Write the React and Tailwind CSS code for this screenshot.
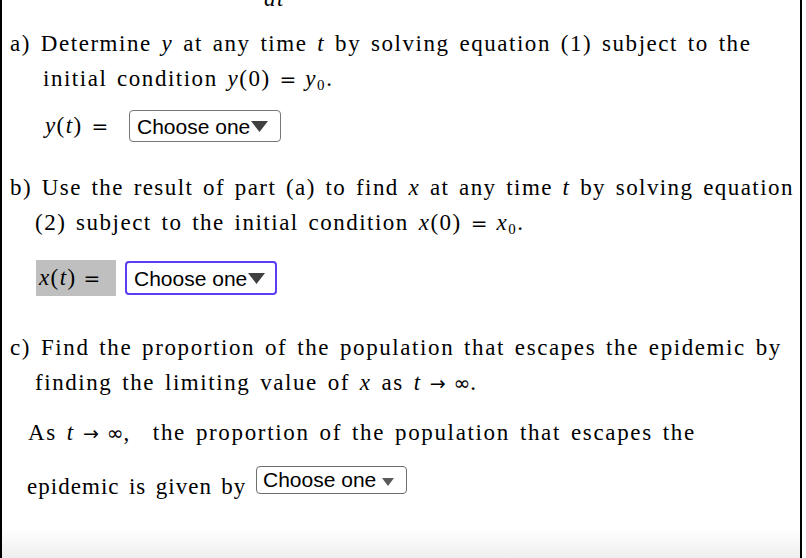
const serif = { fontFamily: '"Liberation Serif", "DejaVu Serif", serif', wordSpacing: '0.16em' };
const sym = { fontFamily: '"DejaVu Sans", sans-serif' };

function V({ children }) {
  return <i className="italic">{children}</i>;
}

function Eq() {
  return <span className="mx-[9px] text-[20px] tracking-normal" style={sym}>=</span>;
}

function Arrow() {
  return <span className="mx-[8px] text-[19px] tracking-normal" style={sym}>→</span>;
}

function Inf() {
  return <span className="text-[20px] tracking-normal" style={sym}>∞</span>;
}

function Caret({ small }) {
  if (small) {
    return (
      <svg width="12" height="8" viewBox="0 0 12 8" className="ml-[6px] mt-[2px]">
        <path d="M0 0 L12 0 L6 8 Z" fill="#5a5a5a" />
      </svg>
    );
  }
  return (
    <svg width="17" height="11" viewBox="0 0 17 11" className="ml-[1px]">
      <path d="M0 0 L17 0 L8.5 11 Z" fill="#404040" />
    </svg>
  );
}

function ChooseOne({ focused, native }) {
  if (native) {
    return (
      <div className="flex items-start h-[28px] w-[151px] pl-[6px] pt-[1px] border border-[#6f6f6f] rounded-[4px] bg-white font-['Liberation_Sans',Arial,sans-serif] text-[21px] leading-[24px] tracking-normal [word-spacing:normal] text-black">
        <span>Choose one</span>
        <span className="self-center"><Caret small /></span>
      </div>
    );
  }
  return (
    <div
      className={
        'flex items-center w-[152px] pl-[7px] rounded-[4px] bg-white font-[\'Liberation_Sans\',Arial,sans-serif] text-[21px] leading-none tracking-normal [word-spacing:normal] text-black ' +
        (focused ? 'border-2 border-[#5b3df5] h-[34px] pl-[6px]' : 'border border-[#777777] h-[32px]')
      }
    >
      <span>Choose one</span>
      <Caret />
    </div>
  );
}

function Line({ pad, children, className = '' }) {
  return (
    <div className={'h-[35px] leading-[35px] whitespace-nowrap ' + className} style={{ paddingLeft: pad }}>
      {children}
    </div>
  );
}

export default function App() {
  return (
    <div className="w-[806px] h-[558px] bg-white overflow-hidden text-black" style={serif}>
      <div className="w-[802px] h-[558px] border-x-2 border-black flex flex-col text-[23px] tracking-[0.06em]">

        {/* tail of the fraction from the line above */}
        <div className="h-[8px] overflow-hidden">
          <div className="-mt-[12px] pl-[262px] leading-[21px]"><V>dt</V></div>
        </div>

        {/* part a */}
        <Line pad={8} className="mt-[18px] tracking-[0.067em]">
          a) Determine <V>y</V> at any time <V>t</V> by solving equation (1) subject to the
        </Line>
        <Line pad={41} className="tracking-[0.066em]">
          initial condition <V>y</V>(0)<Eq /><V>y</V><sub className="text-[15px]">0</sub>.
        </Line>
        <div className="flex items-center h-[32px] mt-[14px] pl-[43px]">
          <span className="w-[84px] whitespace-nowrap"><V>y</V>(<V>t</V>)<Eq /></span>
          <ChooseOne />
        </div>

        {/* part b */}
        <Line pad={8} className="mt-[28px] tracking-[0.062em]">
          b) Use the result of part (a) to find <V>x</V> at any time <V>t</V> by solving equation
        </Line>
        <Line pad={33} className="tracking-[0.065em]">
          (2) subject to the initial condition <V>x</V>(0)<Eq /><V>x</V><sub className="text-[15px]">0</sub>.
        </Line>
        <div className="flex items-center h-[36px] mt-[20px] pl-[34px]">
          <span className="h-[36px] w-[80px] bg-[#bfbfbf] leading-[36px] pl-[3px] mr-[9px] whitespace-nowrap">
            <V>x</V>(<V>t</V>)<span className="mx-[7px] text-[20px] tracking-normal" style={sym}>=</span>
          </span>
          <ChooseOne focused />
        </div>

        {/* part c */}
        <Line pad={8} className="mt-[34px] tracking-[0.069em]">
          c) Find the proportion of the population that escapes the epidemic by
        </Line>
        <Line pad={33} className="tracking-[0.068em]">
          finding the limiting value of <V>x</V> as <V>t</V><Arrow /><Inf />.
        </Line>
        <Line pad={26} className="mt-[15px] tracking-[0.072em]">
          As <V>t</V><Arrow /><Inf />,<span className="mr-[12px]" /> the proportion of the population that escapes the
        </Line>
        <div className="flex items-end mt-[13px] pl-[25px] h-[31px]">
          <span className="w-[229px] leading-[24px] -mb-[5px] whitespace-nowrap tracking-[0.045em]">epidemic is given by</span>
          <ChooseOne native />
        </div>

        <div className="mt-auto h-[30px] bg-gradient-to-b from-white to-[#efefef]" />
      </div>
    </div>
  );
}
